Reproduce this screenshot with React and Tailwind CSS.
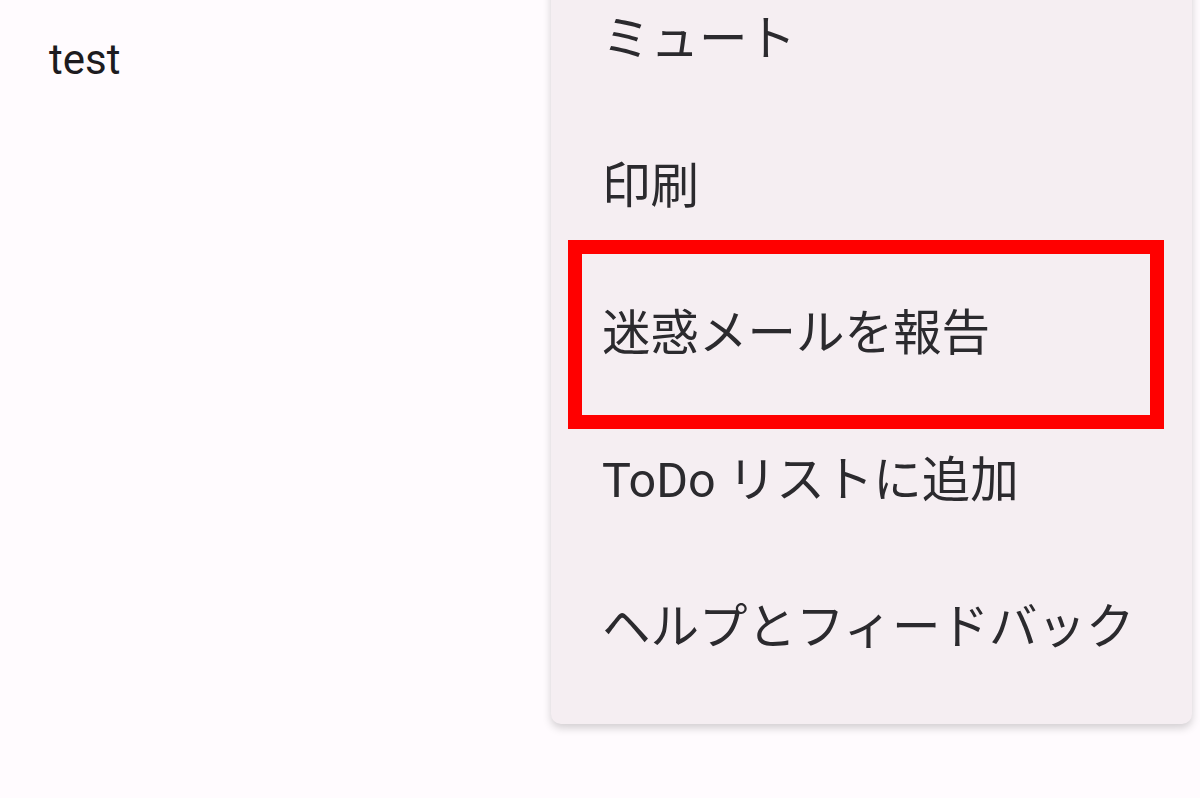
import React from "react";

const items = ["ミュート", "印刷", "迷惑メールを報告", "ToDo リストに追加", "ヘルプとフィードバック"];

const App = () => {
  return (
    <div className="relative h-[798px] w-[1200px] overflow-hidden bg-[#fffbfe] font-['Roboto','Noto_Sans_CJK_JP',sans-serif]">
      {/* page content */}
      <p className="pl-[49px] pt-[36px] text-[42px] leading-[48px] text-[#1d1b20]">test</p>

      {/* overflow menu */}
      <div className="absolute left-[551px] top-[-55px] w-[641px] rounded-[10px] bg-[#f5eef2] pt-[22px] pb-[22px] shadow-[0_4px_8px_rgba(0,0,0,0.18)]">
        {items.map((label, i) => (
          <div key={label} className="relative flex h-[147px] items-center pl-[51px] text-[48.5px] text-[#2b2a2e]">
            <span>{label}</span>
            {i === 2 && (
              <div className="absolute left-[17px] right-[28px] top-[-21px] bottom-[-21px] border-[14px] border-[#ff0000]" />
            )}
          </div>
        ))}
      </div>
    </div>
  );
};

export default App;
